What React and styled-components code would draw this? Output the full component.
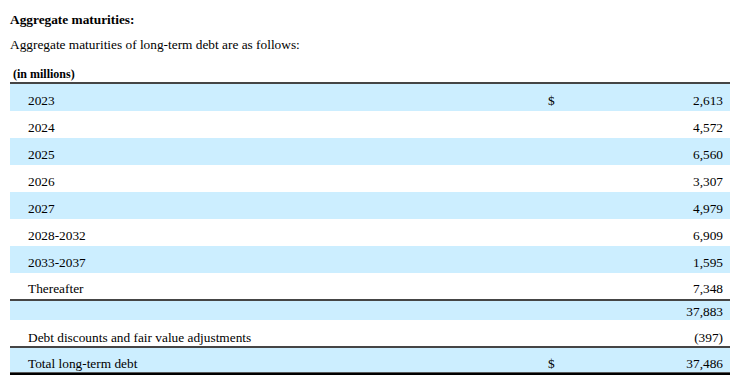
import React from "react";
import styled, { createGlobalStyle } from "styled-components";

const Global = createGlobalStyle`
  html, body { margin: 0; padding: 0; background: #fff; }
  body { font-family: "Liberation Serif", "Times New Roman", serif; color: #000; }
`;

const Page = styled.div`
  width: 743px;
  padding: 12px 13px 0 10px;
  box-sizing: border-box;
`;

const Title = styled.div`
  font-size: 13.33px;
  font-weight: bold;
  line-height: 16px;
`;

const Lead = styled.div`
  margin-top: 9px;
  font-size: 13.33px;
  line-height: 16px;
`;

const Table = styled.div`
  margin-top: 13px;
  width: 720px;
  display: flex;
  flex-direction: column;
`;

const HeaderRow = styled.div`
  font-size: 12px;
  font-weight: bold;
  line-height: 16px;
  padding-left: 3px;
  padding-top: 1px;
  margin-top: -1px;
  border-bottom: 2px solid #454545;
`;

const Row = styled.div`
  display: grid;
  grid-template-columns: 1fr 30px 160px;
  align-items: end;
  box-sizing: border-box;
  height: ${(p) => p.$h}px;
  padding-bottom: ${(p) => p.$pb}px;
  background: ${(p) => (p.$shaded ? "#cceeff" : "#fff")};
  font-size: 13.33px;
  line-height: 15px;
  border-bottom: ${(p) => (p.$rule ? "2px solid #454545" : "none")};
`;

const BottomRule = styled.div`
  height: 1px;
  background: #5a5a5a;
  border-bottom: 2px solid #000;
`;

const Label = styled.span`
  padding-left: 18px;
  white-space: nowrap;
`;

const Dollar = styled.span`
  padding-left: 8px;
`;

const Amount = styled.span`
  text-align: right;
  padding-right: 7px;
`;

const years = [
  ["2023", "2,613", true],
  ["2024", "4,572"],
  ["2025", "6,560"],
  ["2026", "3,307"],
  ["2027", "4,979"],
  ["2028-2032", "6,909"],
  ["2033-2037", "1,595"],
];

export default function App() {
  return (
    <>
      <Global />
      <Page>
        <Title>Aggregate maturities:</Title>
        <Lead>Aggregate maturities of long-term debt are as follows:</Lead>
        <Table>
          <HeaderRow>(in millions)</HeaderRow>
          {years.map(([y, v, d], i) => (
            <Row key={y} $h={27} $pb={3} $shaded={i % 2 === 0}>
              <Label>{y}</Label>
              <Dollar>{d ? "$" : ""}</Dollar>
              <Amount>{v}</Amount>
            </Row>
          ))}
          <Row $h={28} $pb={3} $rule>
            <Label>Thereafter</Label>
            <Dollar />
            <Amount>7,348</Amount>
          </Row>
          <Row $h={19} $pb={1} $shaded>
            <Label />
            <Dollar />
            <Amount>37,883</Amount>
          </Row>
          <Row $h={28} $pb={1} $rule>
            <Label>Debt discounts and fair value adjustments</Label>
            <Dollar />
            <Amount>(397)</Amount>
          </Row>
          <Row $h={24} $pb={1} $shaded>
            <Label>Total long-term debt</Label>
            <Dollar>$</Dollar>
            <Amount>37,486</Amount>
          </Row>
          <BottomRule />
        </Table>
      </Page>
    </>
  );
}
